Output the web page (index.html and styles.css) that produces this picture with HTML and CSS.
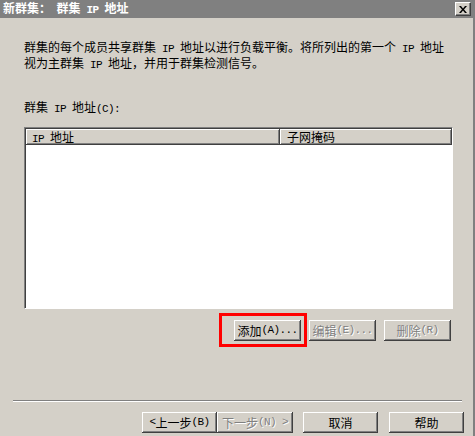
FILE: index.html
```html
<!DOCTYPE html>
<html lang="zh-CN">
<head>
<meta charset="utf-8">
<title>新群集: 群集 IP 地址</title>
<link rel="stylesheet" href="styles.css">
</head>
<body>
<div class="window">
  <div class="titlebar">
    <span class="title">新群集：&nbsp;&nbsp;群集<span class="lat"> IP </span>地址</span>
    <span class="close" role="button" aria-label="关闭"><svg class="x" width="8" height="7" viewBox="0 0 8 7"><path d="M0 0h2l2 2.5L6 0h2L5 3.5 8 7H6L4 4.5 2 7H0l3-3.5z" fill="#000"/></svg></span>
  </div>
  <div class="content">
    <p class="desc">群集的每个成员共享群集<span class="lat"> IP </span>地址以进行负载平衡。将所列出的第一个<span class="lat"> IP </span>地址<br>视为主群集<span class="lat"> IP </span>地址，并用于群集检测信号。</p>
    <p class="label">群集<span class="lat"> IP </span>地址<span class="lat">(C):</span></p>
    <div class="listbox">
      <div class="listhead">
        <div class="col col1"><span class="lat">IP </span>地址</div>
        <div class="col col2">子网掩码</div>
      </div>
      <div class="listbody"></div>
    </div>
    <div class="actions">
      <div class="hl">
        <button class="btn" type="button">添加<span class="lat">(A)...</span></button>
      </div>
      <button class="btn disabled" type="button">编辑<span class="lat">(E)...</span></button>
      <button class="btn disabled" type="button">删除<span class="lat">(R)</span></button>
    </div>
  </div>
  <div class="separator"></div>
  <div class="footer">
    <div class="pair">
      <button class="btn nav" type="button"><span class="lat">&lt; </span>上一步<span class="lat">(B)</span></button>
      <button class="btn nav disabled" type="button">下一步<span class="lat">(N) &gt;</span></button>
    </div>
    <button class="btn wide" type="button">取消</button>
    <button class="btn wide" type="button">帮助</button>
  </div>
</div>
</body>
</html>
```
FILE: styles.css
```css
html, body {
  margin: 0;
  padding: 0;
  background: #d4d0c8;
}
body {
  font-family: "Noto Sans CJK SC", "Liberation Sans", sans-serif;
  font-size: 12px;
  color: #000;
}
.window {
  width: 475px;
  height: 436px;
  box-sizing: border-box;
  border-right: 2px solid #808080;
  background: #d4d0c8;
  overflow: hidden;
}
.lat {
  font-family: "Liberation Mono", "DejaVu Sans Mono", monospace;
  font-size: 11px;
  letter-spacing: -0.6px;
}
.titlebar {
  height: 18px;
  background: #808080;
  display: flex;
  align-items: center;
  justify-content: space-between;
  padding: 0 2px 0 3px;
}
.title {
  color: #fff;
  font-weight: bold;
  font-size: 12px;
  line-height: 14px;
  white-space: pre;
}
.title .lat { font-weight: bold; }
.close {
  width: 16px;
  height: 14px;
  flex: none;
  background: #d4d0c8;
  box-sizing: border-box;
  border-top: 1px solid #ffffff;
  border-left: 1px solid #ffffff;
  border-right: 1px solid #404040;
  border-bottom: 1px solid #404040;
  box-shadow: inset -1px -1px #808080;
  display: flex;
  align-items: center;
  justify-content: center;
}
.x {
  display: block;
}
.content {
  padding: 22px 0 0 24px;
}
.desc {
  margin: 0;
  line-height: 13px;
  white-space: nowrap;
}
.label {
  margin: 28px 0 0;
  line-height: 13px;
}
.listbox {
  margin-top: 11px;
  width: 429px;
  height: 182px;
  box-sizing: border-box;
  border-top: 1px solid #808080;
  border-left: 1px solid #808080;
  border-right: 1px solid #fff;
  border-bottom: 1px solid #fff;
  box-shadow: inset 1px 1px #404040;
  background: #fff;
  padding: 1px 0 0 1px;
}
.listhead {
  display: flex;
  height: 16px;
}
.col {
  box-sizing: border-box;
  height: 16px;
  line-height: 15px;
  background: #d4d0c8;
  box-shadow: inset -1px -1px #404040, inset 1px 1px #fff, inset -2px -2px #808080;
  white-space: nowrap;
}
.col1 {
  width: 254px;
  padding-left: 6px;
}
.col2 {
  flex: 1;
  padding-left: 7px;
}
.actions {
  margin-top: 11px;
  width: 427px;
  display: flex;
  justify-content: flex-end;
  gap: 8px;
}
.hl {
  position: relative;
  display: flex;
}
.hl::after {
  content: "";
  position: absolute;
  left: -15px;
  top: -7px;
  right: -6px;
  bottom: -6px;
  border: 3px solid #ff0000;
  pointer-events: none;
}
.btn {
  width: 67px;
  height: 21px;
  margin: 0;
  padding: 0;
  border: 0;
  background: #d4d0c8;
  box-shadow: inset -1px -1px #404040, inset 1px 1px #fff, inset -2px -2px #808080;
  font-family: "Noto Sans CJK SC", "Liberation Sans", sans-serif;
  font-size: 12px;
  line-height: 19px;
  color: #000;
  white-space: nowrap;
  display: flex;
  align-items: center;
  justify-content: center;
}
.btn.disabled {
  color: #808080;
  text-shadow: 1px 1px 0 #fff;
}
.separator {
  margin: 59px 0 0 13px;
  width: 449px;
  height: 0;
  border-top: 1px solid #808080;
  border-bottom: 1px solid #fff;
}
.footer {
  margin-top: 10px;
  padding-left: 142px;
  display: flex;
  gap: 10px;
}
.pair {
  display: flex;
}
.btn.nav {
  width: 75px;
}
.btn.nav + .btn.nav {
  width: 76px;
}
.btn.wide {
  width: 75px;
}
.footer .btn.wide + .btn.wide {
  margin-left: 1px;
}
```
